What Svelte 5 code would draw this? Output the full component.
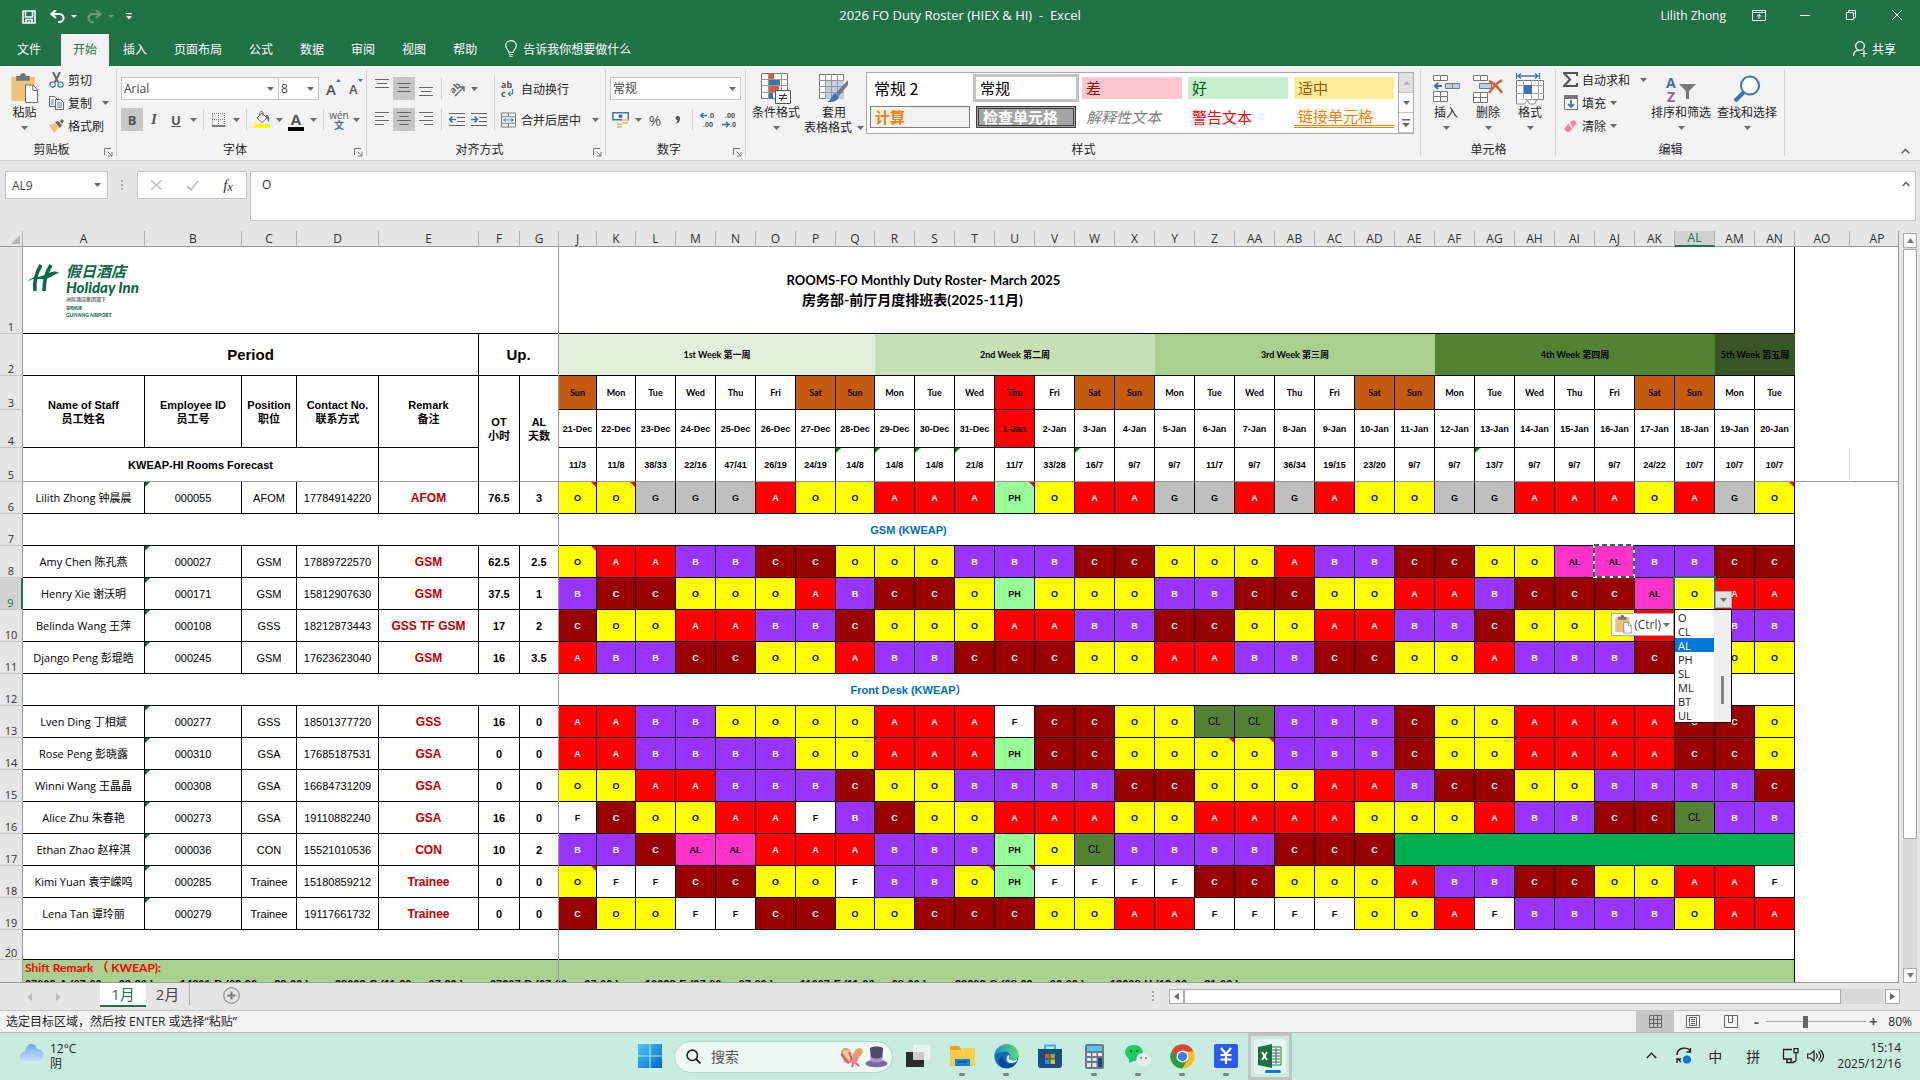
<script lang="ts">
  const menuTabs = ['文件', '开始', '插入', '页面布局', '公式', '数据', '审阅', '视图', '帮助'];

  const columns = [
    'A', 'B', 'C', 'D', 'E', 'F', 'G', 'J', 'K', 'L', 'M', 'N', 'O', 'P', 'Q', 'R', 'S', 'T', 'U', 'V',
    'W', 'X', 'Y', 'Z', 'AA', 'AB', 'AC', 'AD', 'AE', 'AF', 'AG', 'AH', 'AI', 'AJ', 'AK', 'AL', 'AM',
    'AN', 'AO', 'AP',
  ];
  const columnWidths: Record<string, number> = {
    A: 122, B: 97, C: 55, D: 82, E: 100, F: 41, G: 39, J: 38, K: 39, Q: 39, AO: 55, AP: 55,
  };
  const dayColumns = columns.slice(7, 38);

  const weekdays = ['Sun', 'Mon', 'Tue', 'Wed', 'Thu', 'Fri', 'Sat'];
  const days = dayColumns.map((col, i) => ({
    col,
    name: weekdays[i % 7],
    date: i < 11 ? `${21 + i}-Dec` : `${i - 10}-Jan`,
    weekend: i % 7 === 0 || i % 7 === 6,
    holiday: i === 11,
  }));

  const weeks = [
    { label: '1st Week 第一周', span: 8, color: '#e2efda' },
    { label: '2nd Week 第二周', span: 7, color: '#c6e0b4' },
    { label: '3rd Week 第三周', span: 7, color: '#a9d08e' },
    { label: '4th Week 第四周', span: 7, color: '#548235' },
    { label: '5th Week 第五周', span: 2, color: '#375623' },
  ];

  const forecast =
    '11/3 11/8 38/33 22/16 47/41 26/19 24/19 14/8 14/8 14/8 21/8 11/7 33/28 16/7 9/7 9/7 11/7 9/7 36/34 19/15 23/20 9/7 9/7 13/7 9/7 9/7 9/7 24/22 10/7 10/7 10/7'.split(' ');
  const forecastFlags = ['Q', 'R', 'S', 'T', 'W', 'AG'];

  // shifts run from column J on, one code per day; notes lists the commented columns
  const staff = [
    { row: 6, name: 'Lilith Zhong 钟晨晨', id: '000055', pos: 'AFOM', tel: '17784914220', remark: 'AFOM', ot: '76.5', al: '3', notes: ['J', 'K', 'U', 'AN'],
      shifts: 'O O G G G A O O A A A PH O A A G G A G A O O G G A A A O A G O' },
    { row: 8, name: 'Amy Chen 陈孔燕', id: '000027', pos: 'GSM', tel: '17889722570', remark: 'GSM', ot: '62.5', al: '2.5', notes: ['J'],
      shifts: 'O A A B B C C O O O B B B C C O O O A B B C C O O AL AL B B C C' },
    { row: 9, name: 'Henry Xie 谢沃明', id: '000171', pos: 'GSM', tel: '15812907630', remark: 'GSM', ot: '37.5', al: '1', notes: [],
      shifts: 'B C C O O O A B C C O PH O O O B B C C O O A A B C C C AL O A A' },
    { row: 10, name: 'Belinda Wang 王萍', id: '000108', pos: 'GSS', tel: '18212873443', remark: 'GSS TF GSM', ot: '17', al: '2', notes: [],
      shifts: 'C O O A A B B C O O O A A B B C C O O A A B B C O O O A A B B' },
    { row: 11, name: 'Django Peng 彭琨皓', id: '000245', pos: 'GSM', tel: '17623623040', remark: 'GSM', ot: '16', al: '3.5', notes: [],
      shifts: 'A B B C C O O A B B C C C O O A A B B C C O O A B B B C C O O' },
    { row: 13, name: 'Lven Ding 丁相斌', id: '000277', pos: 'GSS', tel: '18501377720', remark: 'GSS', ot: '16', al: '0', notes: [],
      shifts: 'A A B B O O O O A A A F C C O O CL CL B B B C O O A A A A C C O' },
    { row: 14, name: 'Rose Peng 彭晓露', id: '000310', pos: 'GSA', tel: '17685187531', remark: 'GSA', ot: '0', al: '0', notes: ['Z', 'AA'],
      shifts: 'A A B B B B O O A A A PH C C O O O O B B B C O O A A A A C C O' },
    { row: 15, name: 'Winni Wang 王晶晶', id: '000308', pos: 'GSA', tel: '16684731209', remark: 'GSA', ot: '0', al: '0', notes: [],
      shifts: 'O O A A B B B C O O B B B B C C O O O A A B C C O O B B B B C' },
    { row: 16, name: 'Alice Zhu 朱春艳', id: '000273', pos: 'GSA', tel: '19110882240', remark: 'GSA', ot: '16', al: '0', notes: [],
      shifts: 'F C O O A A F B C O O A A A O O A A A A O O O A B B C C CL B B' },
    { row: 17, name: 'Ethan Zhao 赵梓淇', id: '000036', pos: 'CON', tel: '15521010536', remark: 'CON', ot: '10', al: '2', notes: [],
      shifts: 'B B C AL AL A A A B B B PH O CL B B B B C C C' },
    { row: 18, name: 'Kimi Yuan 袁宇嵘鸣', id: '000285', pos: 'Trainee', tel: '15180859212', remark: 'Trainee', ot: '0', al: '0', notes: ['J', 'T', 'U'],
      shifts: 'O F F C C O O F B B O PH F F F F C C O O O A B B C C O O A A F' },
    { row: 19, name: 'Lena Tan 谭玲丽', id: '000279', pos: 'Trainee', tel: '19117661732', remark: 'Trainee', ot: '0', al: '0', notes: [],
      shifts: 'C O O F F C C O O C C C O O A A F F F F O O A F B B B B O A A' },
  ];
  const gsm = staff.slice(1, 5);
  const frontDesk = staff.slice(5);

  const shiftHours = [
    '07003-A (07:00 — 03:30 ),', '14301-B (03:30 — 23:00 ),', '23003-C (11:00 — 07:30 ),',
    '07007-D (07:00 — 07:00 ),', '10003-E (07:00 — 07:00 ),', '11007-F (11:00 — 08:00 ),',
    '22003-G (08:00 — 06:00 ),', '12008-H (13:00 — 21:00 ),',
  ];
  const codes = ['O', 'CL', 'AL', 'PH', 'SL', 'ML', 'BT', 'UL'];
  let picked = $state('AL');
  let cellText = $state('O');

  const styles = [
    { label: '常规 2', cls: 'plain' },
    { label: '常规', cls: 'current' },
    { label: '差', cls: 'bad' },
    { label: '好', cls: 'good' },
    { label: '适中', cls: 'neutral' },
    { label: '计算', cls: 'calc' },
    { label: '检查单元格', cls: 'check' },
    { label: '解释性文本', cls: 'explain' },
    { label: '警告文本', cls: 'warn' },
    { label: '链接单元格', cls: 'linked' },
  ];
</script>

{#snippet caret()}
  <svg class="caret" width="7" height="4" viewBox="0 0 7 4"><path d="M0 0h7L3.5 4z" fill="#6a6a6a" /></svg>
{/snippet}

{#snippet launcher()}
  <button class="launcher" aria-label="更多设置">
    <svg width="9" height="9" viewBox="0 0 9 9"><path d="M.5 7V.5H7M3.500 3.500l4 4M8 4v4H4" fill="none" stroke="#777" /></svg>
  </button>
{/snippet}

{#snippet lines(widths: number[], align: string)}
  <svg width="14" height={widths.length * 4 - 1} viewBox="0 0 14 {widths.length * 4 - 1}">
    {#each widths as w, i}
      <rect x={align === 'left' ? 0 : align === 'right' ? 14 - w : (14 - w) / 2} y={i * 4} width={w} height="1" fill="#666" />
    {/each}
  </svg>
{/snippet}

{#snippet clipboard(w: number, h: number)}
  <svg width={w} height={h} viewBox="0 0 28 32">
    <path d="M0 4h24v25H0z" fill="#edc37b" />
    <path d="M5 3h4c0-4 6-4 6 0h4v5H5z" fill="#737373" />
    <path d="M14.500 12.500h8l4.500 5v13H14.500z" fill="#fff" stroke="#666" />
    <path d="M22 13v5h5" fill="none" stroke="#666" />
  </svg>
{/snippet}

{#snippet shiftRow(p: (typeof staff)[number])}
  {@const list = p.shifts.split(' ')}
  <tr class="person">
    <th class="rowno" class:active={p.row === 9}>{p.row}</th>
    <td class="name">{p.name}</td>
    <td class="flag">{p.id}</td>
    <td>{p.pos}</td>
    <td>{p.tel}</td>
    <td class="remark">{p.remark}</td>
    <td class="b">{p.ot}</td>
    <td class="b">{p.al}</td>
    {#each list as code, i}
      {@const col = dayColumns[i]}
      <td class="shift s-{code}" class:note={p.notes.includes(col)}>
        {code}
        {#if p.row === 8 && col === 'AJ'}
          <svg class="ants" width="42" height="34" viewBox="0 0 42 34">
            <rect x="1" y="1" width="40" height="32" fill="none" stroke="#fff" stroke-width="2" />
            <rect x="1" y="1" width="40" height="32" fill="none" stroke="#217346" stroke-width="2" stroke-dasharray="5 3" />
          </svg>
        {/if}
        {#if p.row === 9 && col === 'AL'}
          <span class="cursor"></span>
          <button class="drop" aria-label="选择班次">{@render caret()}</button>
          <button class="paste-options">{@render clipboard(17, 19)}<span>(Ctrl)</span>{@render caret()}</button>
          <div class="picker">
            <select size="8" aria-label="班次列表" bind:value={picked}>
              {#each codes as c}
                <option value={c}>{c}</option>
              {/each}
            </select>
            <span class="picker-bar"><i></i></span>
          </div>
        {/if}
      </td>
    {/each}
    {#if list.length < 31}
      <td class="gone" colspan={31 - list.length}></td>
    {/if}
    <td class="blank"></td>
    <td class="blank"></td>
  </tr>
{/snippet}

<div class="window">
  <header class="titlebar">
    <div class="quick">
      <button aria-label="保存">
        <svg width="14" height="14" viewBox="0 0 14 14"><path d="M1 1h12v12H1zM3.500 1v6h7V1M4 13v-3.500h6V13" fill="none" stroke="#fff" stroke-width="1.600" /><path d="M6 11h2v2H6z" fill="#fff" /></svg>
      </button>
      <button class="undo" aria-label="撤消">
        <svg width="15" height="13" viewBox="0 0 15 13"><path d="M6 0 1.500 4 6 8M2 4h7c6 0 6 8 0 8H8" fill="none" stroke="#fff" stroke-width="2.200" /></svg>
        <svg width="6" height="3" viewBox="0 0 6 3"><path d="M0 0h6L3 3z" fill="#fff" /></svg>
      </button>
      <button class="redo" aria-label="恢复">
        <svg width="15" height="13" viewBox="0 0 15 13"><path d="M9 0l4.500 4L9 8M13 4H6C0 4 0 12 6 12h1" fill="none" stroke="#fff" stroke-width="2.200" /></svg>
        <svg width="6" height="3" viewBox="0 0 6 3"><path d="M0 0h6L3 3z" fill="#fff" /></svg>
      </button>
      <button class="more" aria-label="自定义快速访问工具栏">
        <svg width="6" height="7" viewBox="0 0 6 7"><path d="M0 0h6v1.200H0zM0 3h6L3 6.500z" fill="#fff" /></svg>
      </button>
    </div>
    <h1>2026 FO Duty Roster (HIEX &amp; HI)&nbsp; -&nbsp; Excel</h1>
    <div class="winctl">
      <span class="user">Lilith Zhong</span>
      <button aria-label="功能区显示选项">
        <svg width="14" height="11" viewBox="0 0 14 11"><path d="M.5.5h13v10H.5zM0 2.500h14M7 9V4.500M5 6.500l2-2 2 2" fill="none" stroke="#fff" /></svg>
      </button>
      <button aria-label="最小化"><svg width="10" height="10" viewBox="0 0 10 10"><path d="M0 5.500h10" stroke="#fff" /></svg></button>
      <button aria-label="还原"><svg width="10" height="10" viewBox="0 0 10 10"><path d="M.5 2.500h7v7h-7zM2.500 2V.5h7v7H8" fill="none" stroke="#fff" /></svg></button>
      <button aria-label="关闭"><svg width="10" height="10" viewBox="0 0 10 10"><path d="M0 0l10 10M10 0 0 10" stroke="#fff" /></svg></button>
    </div>
  </header>

  <nav class="tabs">
    {#each menuTabs as tab}
      <button class:on={tab === '开始'}>{tab}</button>
    {/each}
    <button class="tell">
      <svg width="12" height="17" viewBox="0 0 12 17"><path d="M4 12.500c0-2-3.300-3.500-3.300-7 0-6.500 10.600-6.500 10.600 0 0 3.500-3.300 5-3.300 7zM4 14.500h4M4.500 16.300h3" fill="none" stroke="#fff" stroke-width="1.100" /></svg>
      告诉我你想要做什么
    </button>
    <button class="share">
      <svg width="15" height="16" viewBox="0 0 15 16"><circle cx="7" cy="5" r="4.300" fill="none" stroke="#fff" stroke-width="1.200" /><path d="M.6 15c0-4 2.500-5.700 5-5.700M11 9v7M7.500 12.500h7" fill="none" stroke="#fff" stroke-width="1.200" /></svg>
      共享
    </button>
  </nav>

  <section class="ribbon">
    <div class="group clip">
      <div class="body">
        <button class="big paste">
          <span class="pic">{@render clipboard(28, 31)}</span>
          粘贴
          <span class="line">{@render caret()}</span>
        </button>
        <div class="stack">
          <button>
            <svg width="15" height="16" viewBox="0 0 15 16"><path d="M4 0l5 10M11 0 6 10" stroke="#666" stroke-width="2" /><circle cx="3.500" cy="12.500" r="2.700" fill="none" stroke="#4a80b8" stroke-width="1.300" /><circle cx="11.500" cy="12.500" r="2.700" fill="none" stroke="#4a80b8" stroke-width="1.300" /></svg>
            剪切
          </button>
          <button>
            <svg width="15" height="14" viewBox="0 0 15 14"><path d="M.5.5h5l3 3v7h-8z" fill="#fff" stroke="#666" /><path d="M6.500 3.500h5l3 3v7h-8z" fill="#fff" stroke="#666" /><path d="M2 4h3M2 6h3M2 8h3M8 7h5M8 9h5M8 11h5" stroke="#4a80b8" /></svg>
            复制 <span class="far">{@render caret()}</span>
          </button>
          <button>
            <svg width="15" height="14" viewBox="0 0 15 14"><path d="M0 6l6-2 4 4-5 6z" fill="#edc37b" /><path d="M6 3l3-1 4 4-2 3zM11 2l2-2 2 2-2 3z" fill="#666" /></svg>
            格式刷
          </button>
        </div>
      </div>
      <div class="caption">剪贴板{@render launcher()}</div>
    </div>

    <div class="group font">
      <div class="rows">
        <div class="tools">
          <span class="combo face"><select aria-label="字体"><option>Arial</option></select>{@render caret()}</span>
          <span class="combo size"><select aria-label="字号"><option>8</option></select>{@render caret()}</span>
          <button class="grow" aria-label="增大字号"><b>A</b><svg width="5" height="3" viewBox="0 0 5 3"><path d="M0 3h5L2.500 0z" fill="#3c74b0" /></svg></button>
          <button class="grow small" aria-label="减小字号"><b>A</b><svg width="5" height="3" viewBox="0 0 5 3"><path d="M0 0h5L2.500 3z" fill="#3c74b0" /></svg></button>
        </div>
        <div class="tools">
          <button class="t pressed"><b>B</b></button>
          <button class="t italic">I</button>
          <button class="t under">U</button>
          <button class="a" aria-label="下划线选项">{@render caret()}</button>
          <i class="sep"></i>
          <button class="t" aria-label="边框">
            <svg width="14" height="14" viewBox="0 0 14 14"><path d="M.5.500v12M6.500 0v12M12.500 0v12M0 .5h13M0 6.500h13" stroke="#777" stroke-dasharray="1 1" /><path d="M0 13h13.500" stroke="#555" stroke-width="1.500" /></svg>
          </button>
          <button class="a" aria-label="边框选项">{@render caret()}</button>
          <i class="sep"></i>
          <button class="t" aria-label="填充颜色">
            <svg width="17" height="17" viewBox="0 0 17 17"><path d="M3 7l5-5 5 5-5 4.500z" fill="#fff" stroke="#666" /><path d="M6 5V1.500c0-1.500 3-1.500 3 0V5" fill="none" stroke="#666" /><path d="M12 4c3 0 4 3 3 7-2-1-1-4-3-4z" fill="#4a80b8" /><path d="M0 13h16v4H0z" fill="#ff0" /></svg>
          </button>
          <button class="a" aria-label="填充选项">{@render caret()}</button>
          <button class="t fontcolor" aria-label="字体颜色"><b>A</b></button>
          <button class="a" aria-label="字体颜色选项">{@render caret()}</button>
          <i class="sep"></i>
          <button class="t pinyin"><span>wén</span><b>文</b></button>
          <button class="a" aria-label="拼音选项">{@render caret()}</button>
        </div>
      </div>
      <div class="caption">字体{@render launcher()}</div>
    </div>

    <div class="group align">
      <div class="body">
        <div class="rows">
          <div class="tools">
            <button class="t up" aria-label="顶端对齐">{@render lines([14, 10, 14], 'center')}</button>
            <button class="t pressed" aria-label="垂直居中">{@render lines([14, 10, 14], 'center')}</button>
            <button class="t down" aria-label="底端对齐">{@render lines([14, 10, 14], 'center')}</button>
            <i class="sep"></i>
            <button class="t" aria-label="方向">
              <svg width="18" height="18" viewBox="0 0 18 18"><text x="2" y="12" transform="rotate(-45 6 9)" font-size="9" font-weight="700" fill="#666">ab</text><path d="M7 16 15.500 7.500M11.500 7H16v4.500" fill="none" stroke="#666" stroke-width="1.300" /></svg>
            </button>
            <button class="a" aria-label="方向选项">{@render caret()}</button>
          </div>
          <div class="tools">
            <button class="t" aria-label="左对齐">{@render lines([14, 9, 14, 9], 'left')}</button>
            <button class="t pressed" aria-label="居中">{@render lines([14, 9, 14, 9], 'center')}</button>
            <button class="t" aria-label="右对齐">{@render lines([14, 9, 14, 9], 'right')}</button>
            <i class="sep"></i>
            <button class="t" aria-label="减少缩进">
              <svg width="16" height="14" viewBox="0 0 16 14"><path d="M0 .5h16M8 4.500h8M8 8.500h8M0 12.500h16" stroke="#666" /><path d="M7 6.500H1M3.500 3.500l-3 3 3 3" fill="none" stroke="#3c74b0" stroke-width="1.600" /></svg>
            </button>
            <button class="t" aria-label="增加缩进">
              <svg width="16" height="14" viewBox="0 0 16 14"><path d="M0 .5h16M8 4.500h8M8 8.500h8M0 12.500h16" stroke="#666" /><path d="M0 6.500h6M3.500 3.500l3 3-3 3" fill="none" stroke="#3c74b0" stroke-width="1.600" /></svg>
            </button>
          </div>
        </div>
        <i class="sep long"></i>
        <div class="rows">
          <button class="wide">
            <svg class="roomy" width="15" height="20" viewBox="0 0 15 20"><text x="0" y="9" font-size="9" font-weight="700" fill="#555">ab</text><text x="0" y="18" font-size="9" font-weight="700" fill="#555">c</text><path d="M11.500 10v5H7.500M9.500 12.500l-2 2.500 2 2" fill="none" stroke="#3c74b0" stroke-width="1.200" /></svg>
            自动换行
          </button>
          <button class="wide">
            <svg width="15" height="16" viewBox="0 0 16 16"><path d="M.5.5h15v15H.5zM0 4.500h16M0 11.500h16M8 0v4M8 12v4" fill="none" stroke="#777" /><path d="M2.500 8h11M5 6 3 8l2 2M11 6l2 2-2 2" fill="none" stroke="#3c74b0" /></svg>
            合并后居中 <span class="far">{@render caret()}</span>
          </button>
        </div>
      </div>
      <div class="caption">对齐方式{@render launcher()}</div>
    </div>

    <div class="group number">
      <div class="rows">
        <span class="combo"><select aria-label="数字格式"><option>常规</option></select>{@render caret()}</span>
        <div class="tools">
          <button class="t" aria-label="会计数字格式">
            <svg width="18" height="16" viewBox="0 0 18 16"><path d="M.8.8h15.400v7H.8z" fill="#fff" stroke="#3c74b0" stroke-width="1.500" /><circle cx="8.500" cy="4.300" r="2" fill="#3c74b0" /><path d="M10 7h6v2h-6zM10 10h6v2h-6zM5 11h5v2H5zM5 14h5v2H5z" fill="#edc37b" /></svg>
          </button>
          <button class="a" aria-label="会计格式选项">{@render caret()}</button>
          <button class="t sign">%</button>
          <button class="t sign" aria-label="千位分隔样式"><svg width="5" height="8" viewBox="0 0 5 8"><path d="M2.500 0C0 0 0 4 2.500 4 2.500 6 1.500 7 0 7.500 4 7.500 5 5 5 2.500 5 1 4 0 2.500 0z" fill="#555" /></svg></button>
          <i class="sep"></i>
          <button class="t" aria-label="增加小数位数">
            <svg width="16" height="19" viewBox="0 0 16 19" font-size="7" font-weight="700" fill="#555"><text x="8" y="8">.0</text><text x="3" y="17">.00</text><path d="M7 5.500H1M3.500 3l-3 2.500L3.500 8" fill="none" stroke="#3c74b0" stroke-width="1.500" /></svg>
          </button>
          <button class="t" aria-label="减少小数位数">
            <svg width="16" height="19" viewBox="0 0 16 19" font-size="7" font-weight="700" fill="#555"><text x="3" y="8">.00</text><text x="8" y="17">.0</text><path d="M0 14.500h6M4 12l3 2.500L4 17" fill="none" stroke="#3c74b0" stroke-width="1.500" /></svg>
          </button>
        </div>
      </div>
      <div class="caption">数字{@render launcher()}</div>
    </div>

    <div class="group styles">
      <div class="body">
        <button class="big cond">
          <span class="pic">
            <svg width="30" height="31" viewBox="0 0 30 31"><path d="M.5.5h26v25H.5z" fill="#fff" stroke="#777" /><path d="M0 6.500h27M0 12.500h27M0 19.500h27M7.500 0v26M20.500 0v26" stroke="#999" /><path d="M8 1h5v5H8zM8 13h10v6H8z" fill="#d65f3e" /><path d="M8 7h11v5H8zM8 20h4v5H8z" fill="#3c74b0" /><path d="M14.500 17.500h15v13h-15z" fill="#fff" stroke="#555" /><path d="M18 22.500h8M18 25.500h8M24 20l-4 8" stroke="#333" /></svg>
          </span>
          条件格式
          <span class="line">{@render caret()}</span>
        </button>
        <button class="big tablefmt">
          <span class="pic">
            <svg width="30" height="29" viewBox="0 0 30 29"><path d="M.5.5h24v24H.5z" fill="#fff" stroke="#777" /><path d="M7 7h18v18H7z" fill="#bcd0e8" /><path d="M0 6.500h25M0 12.500h25M0 18.500h25M6.500 0v25M12.500 0v25M18.500 0v25" stroke="#999" /><path d="M29 6v5l-9 11-3-3z" fill="#777" /><path d="M16 19l4 4c-2 5-7 5-12 5 5-2 4-7 8-9z" fill="#3c74b0" /></svg>
          </span>
          套用
          <span class="line">表格格式 {@render caret()}</span>
        </button>
        <div class="gallery">
          <div class="swatches">
            {#each styles as s}
              <button class="sw {s.cls}">{s.label}</button>
            {/each}
          </div>
          <div class="spin">
            <button disabled aria-label="上一行"><svg width="7" height="4" viewBox="0 0 7 4"><path d="M0 4h7L3.500 0z" fill="#b5b5b5" /></svg></button>
            <button aria-label="下一行">{@render caret()}</button>
            <button aria-label="其他样式"><svg width="8" height="8" viewBox="0 0 8 8"><path d="M0 0h8v1.500H0zM0 4h8L4 8z" fill="#666" /></svg></button>
          </div>
        </div>
      </div>
      <div class="caption">样式</div>
    </div>

    <div class="group cells">
      <div class="body">
        <button class="big">
          <span class="pic"><svg width="27" height="28" viewBox="0 0 27 28"><path d="M.5.5h14v5H.5zM7.500 0v6M.5 16.500h14v10H.5zM7.500 16v11M0 21.500h15" fill="#fff" stroke="#777" /><path d="M12.500 8.500h14v5h-14zM19.500 8v6" fill="#bcd0e8" stroke="#777" /><path d="M9 11H2M5 8l-3 3 3 3" fill="none" stroke="#3c74b0" stroke-width="2" /></svg></span>
          插入
          <span class="line">{@render caret()}</span>
        </button>
        <button class="big">
          <span class="pic"><svg width="30" height="28" viewBox="0 0 30 28"><path d="M.5.5h14v5H.5zM7.500 0v6M.5 17.500h14v10H.5zM7.500 17v11M0 22.500h15" fill="#fff" stroke="#777" /><path d="M6.500 8.500h12v5h-12z" fill="#bcd0e8" stroke="#777" /><path d="M16 6c5 2 9 6 13 12M29 5c-5 3-9 7-13 13" fill="none" stroke="#d65f3e" stroke-width="2.500" /></svg></span>
          删除
          <span class="line">{@render caret()}</span>
        </button>
        <button class="big">
          <span class="pic"><svg width="29" height="32" viewBox="0 0 29 32"><path d="M.5 0v6M23.500 0v6M2 3h20M5 .5 2 3l3 2.500M19 .5 22 3l-3 2.500" fill="none" stroke="#3c74b0" stroke-width="1.300" /><path d="M.5 7.500h27v19H.5z" fill="#fff" stroke="#777" /><path d="M0 12.500h28M0 20.500h28M7.500 7v20M15.500 7v20M22.500 7v20" stroke="#aaa" /><path d="M8 12h8v9H8z" fill="#3c74b0" /><path d="M.5 26v5h8l3-4 2 4h5l2-4" fill="#fff" stroke="#888" /></svg></span>
          格式
          <span class="line">{@render caret()}</span>
        </button>
      </div>
      <div class="caption">单元格</div>
    </div>

    <div class="group edit">
      <div class="body">
        <div class="stack">
          <button>
            <svg width="15" height="15" viewBox="0 0 15 15"><path d="M14 4V1H1l6 6.500L1 14h13v-3" fill="none" stroke="#555" stroke-width="2" /></svg>
            自动求和 <span class="far">{@render caret()}</span>
          </button>
          <button>
            <svg width="15" height="15" viewBox="0 0 15 15"><path d="M1.500.5h13v14h-13z" fill="#fff" stroke="#777" /><path d="M1 0h14v4H1z" fill="#777" /><path d="M8 5v7M5 9l3 3 3-3" fill="none" stroke="#3c74b0" stroke-width="1.800" /></svg>
            填充 {@render caret()}
          </button>
          <button>
            <svg width="15" height="12" viewBox="0 0 15 12"><path d="M7 2l4-2 3 3-4 5z" fill="#e8889a" /><path d="M6 3l4 5-4 4H4L1 9z" fill="#e8889a" /><path d="M5.500 3.500l4 5" stroke="#fff" /></svg>
            清除 {@render caret()}
          </button>
        </div>
        <button class="big sort">
          <span class="pic"><svg width="30" height="30" viewBox="0 0 30 30" font-size="14" font-weight="700"><text x="0" y="14" fill="#3c74b0">A</text><text x="1" y="28" fill="#955cb0">Z</text><path d="M13 10h17l-7 7v8h-3v-8z" fill="#777" /></svg></span>
          排序和筛选
          <span class="line">{@render caret()}</span>
        </button>
        <button class="big sort">
          <span class="pic"><svg width="28" height="28" viewBox="0 0 28 28"><circle cx="17" cy="10.500" r="9" fill="#fff" stroke="#3c74b0" stroke-width="2" /><path d="M11 17 2 26" stroke="#3c74b0" stroke-width="4" /></svg></span>
          查找和选择
          <span class="line">{@render caret()}</span>
        </button>
      </div>
      <div class="caption">编辑</div>
    </div>
    <button class="collapse" aria-label="折叠功能区"><svg width="9" height="6" viewBox="0 0 9 6"><path d="M.7 5.300 4.500 1.500l3.800 3.800" fill="none" stroke="#666" stroke-width="1.600" /></svg></button>
  </section>

  <section class="formula">
    <div class="namebox"><input aria-label="名称框" value="AL9" />{@render caret()}</div>
    <span class="grip"></span>
    <div class="fx">
      <button aria-label="取消"><svg width="11" height="10" viewBox="0 0 11 10"><path d="M0 0l11 10M11 0 0 10" stroke="#c3c3c3" stroke-width="1.600" /></svg></button>
      <button aria-label="输入"><svg width="13" height="11" viewBox="0 0 13 11"><path d="M1 6l4 4 7-9" fill="none" stroke="#c3c3c3" stroke-width="2" /></svg></button>
      <button class="fn"><i>f<sub>x</sub></i></button>
    </div>
    <div class="bar">
      <textarea aria-label="编辑栏" bind:value={cellText}></textarea>
      <svg width="8" height="6" viewBox="0 0 8 6"><path d="M.7 5 4 1.500 7.300 5" fill="none" stroke="#666" stroke-width="1.600" /></svg>
    </div>
  </section>

  <main class="work">
    <div class="sheet">
      <table>
        <colgroup>
          <col style="width: 23px" />
          {#each columns as c}
            <col style="width: {columnWidths[c] ?? 40}px" />
          {/each}
        </colgroup>
        <thead>
          <tr>
            <th class="corner"><svg width="9" height="9" viewBox="0 0 9 9"><path d="M9 0v9H0z" fill="#b4b4b4" /></svg></th>
            {#each columns as c}
              <th class:active={c === 'AL'}>{c}</th>
            {/each}
          </tr>
        </thead>
        <tbody>
          <tr class="r1">
            <th class="rowno">1</th>
            <td colspan="38" class="heading">
              <div class="logo">
                <svg width="32" height="28" viewBox="0 0 32 28"><path d="M14 1C9 9 7 18 8 27M24 1c-6 9-7 17-7 26" fill="none" stroke="#0a6847" stroke-width="3.600" /><path d="M0 18C5 12 10 14 15 12 21 10 26 5 32 9 27 10 24 14 18 15 11 16 6 13 0 18z" fill="#0a6847" /></svg>
                <div>
                  <b class="cn">假日酒店</b>
                  <b class="en">Holiday Inn</b>
                  <span>洲际酒店集团旗下</span>
                  <span class="city">贵阳机场</span>
                  <strong>GUIYANG AIRPORT</strong>
                </div>
              </div>
              <div class="t1">ROOMS-FO Monthly Duty Roster- March 2025</div>
              <div class="t2">房务部-前厅月度排班表(2025-11月)</div>
            </td>
            <td class="blank"></td><td class="blank"></td>
          </tr>
          <tr class="r2">
            <th class="rowno">2</th>
            <td colspan="5" class="large">Period</td>
            <td colspan="2" class="large">Up.</td>
            {#each weeks as w}
              <td colspan={w.span} class="week" style="background: {w.color}">{w.label}</td>
            {/each}
            <td class="blank"></td><td class="blank"></td>
          </tr>
          <tr class="r3">
            <th class="rowno">3</th>
            <td rowspan="2" class="b">Name of Staff<br />员工姓名</td>
            <td rowspan="2" class="b">Employee ID<br />员工号</td>
            <td rowspan="2" class="b">Position<br />职位</td>
            <td rowspan="2" class="b">Contact No.<br />联系方式</td>
            <td rowspan="2" class="b">Remark<br />备注</td>
            <td rowspan="3" class="b frozen">OT<br />小时</td>
            <td rowspan="3" class="b frozen">AL<br />天数</td>
            {#each days as d}
              <td class="weekday" class:weekend={d.weekend} class:holiday={d.holiday}>{d.name}</td>
            {/each}
            <td class="blank"></td><td class="blank"></td>
          </tr>
          <tr class="r4">
            <th class="rowno">4</th>
            {#each days as d}
              <td class="date" class:holiday={d.holiday}>{d.date}</td>
            {/each}
            <td class="blank"></td><td class="blank"></td>
          </tr>
          <tr class="r5">
            <th class="rowno">5</th>
            <td colspan="4" class="b">KWEAP-HI Rooms Forecast</td>
            <td></td>
            {#each forecast as f, i}
              <td class="date" class:flag={forecastFlags.includes(dayColumns[i])}>{f}</td>
            {/each}
            <td class="blank lined"></td><td class="blank"></td>
          </tr>
          {@render shiftRow(staff[0])}
          <tr class="person">
            <th class="rowno">7</th>
            <td colspan="38" class="section">GSM (KWEAP)</td>
            <td class="blank"></td><td class="blank"></td>
          </tr>
          {#each gsm as p}
            {@render shiftRow(p)}
          {/each}
          <tr class="person">
            <th class="rowno">12</th>
            <td colspan="38" class="section">Front Desk (KWEAP）</td>
            <td class="blank"></td><td class="blank"></td>
          </tr>
          {#each frontDesk as p}
            {@render shiftRow(p)}
          {/each}
          <tr class="r20">
            <th class="rowno">20</th>
            <td colspan="38"></td>
            <td class="blank"></td><td class="blank"></td>
          </tr>
          <tr class="r21">
            <th class="rowno">21</th>
            <td colspan="38" class="legend">
              <div class="key">Shift Remark （ KWEAP):</div>
              <div class="hours">{#each shiftHours as h}<span>{h}</span>{/each}</div>
            </td>
            <td class="blank"></td><td class="blank"></td>
          </tr>
        </tbody>
      </table>
      <i class="freeze"></i>
    </div>
    <div class="vscroll">
      <button aria-label="向上滚动"><svg width="7" height="5" viewBox="0 0 7 5"><path d="M0 5h7L3.500 0z" fill="#777" /></svg></button>
      <div class="track"><div class="thumb"></div></div>
      <button aria-label="向下滚动"><svg width="7" height="5" viewBox="0 0 7 5"><path d="M0 0h7L3.500 5z" fill="#777" /></svg></button>
    </div>
  </main>

  <footer class="sheets">
    <div class="arrows">
      <svg width="5" height="8" viewBox="0 0 5 8"><path d="M5 0v8L0 4z" fill="#bbb" /></svg>
      <svg width="5" height="8" viewBox="0 0 5 8"><path d="M0 0v8l5-4z" fill="#bbb" /></svg>
    </div>
    <button class="on">1月</button>
    <button class="tab">2月</button>
    <button class="add" aria-label="新工作表"><svg width="17" height="17" viewBox="0 0 17 17"><circle cx="8.500" cy="8.500" r="7.800" fill="none" stroke="#777" /><path d="M8.500 4.500v8M4.500 8.500h8" stroke="#777" stroke-width="2" /></svg></button>
    <span class="grip"></span>
    <div class="hscroll">
      <button aria-label="向左滚动"><svg width="5" height="7" viewBox="0 0 5 7"><path d="M5 0v7L0 3.500z" fill="#666" /></svg></button>
      <div class="track"><div class="thumb"></div></div>
      <button aria-label="向右滚动"><svg width="5" height="7" viewBox="0 0 5 7"><path d="M0 0v7l5-3.500z" fill="#666" /></svg></button>
    </div>
  </footer>

  <div class="status">
    <span>选定目标区域，然后按 ENTER 或选择“粘贴”</span>
    <div class="views">
      <button class="on" aria-label="普通"><svg width="13" height="13" viewBox="0 0 13 13"><path d="M.5.5h12v12H.5zM0 4.500h13M0 8.500h13M4.500 0v13M8.500 0v13" fill="none" stroke="#666" /></svg></button>
      <button aria-label="页面布局"><svg width="14" height="13" viewBox="0 0 14 13"><path d="M.5.5h13v12H.5zM3.500 2.500h7v8h-7zM5 4.500h4M5 6.500h4M5 8.500h4" fill="none" stroke="#666" /></svg></button>
      <button aria-label="分页预览"><svg width="14" height="13" viewBox="0 0 14 13"><path d="M.5.5h13v12H.5zM4.500 0v7.500M8.500 0v7.500M4 7.500h5" fill="none" stroke="#666" /></svg></button>
    </div>
    <div class="zoom">
      <b>-</b><input type="range" min="10" max="190" value="80" aria-label="缩放" /><b>+</b>
      <span>80%</span>
    </div>
  </div>

  <div class="taskbar">
    <button class="weather">
      <svg width="25" height="18" viewBox="0 0 25 18"><defs><linearGradient id="cl" x2="0" y2="1"><stop stop-color="#7aa6e8" /><stop offset="1" stop-color="#c9dcf8" /></linearGradient></defs><path d="M6 17C-1 17-1 8 6 8 7-2 17-2 18 5c9 0 9 12 0 12z" fill="url(#cl)" /></svg>
      <span>12°C<br />阴</span>
    </button>
    <div class="dock">
      <button aria-label="开始"><svg width="24" height="24" viewBox="0 0 24 24"><defs><linearGradient id="win" x2="1" y2="1"><stop stop-color="#4cc8f8" /><stop offset="1" stop-color="#0067c8" /></linearGradient></defs><path d="M0 0h11.500v11.500H0zM12.500 0H24v11.500H12.500zM0 12.500h11.500V24H0zM12.500 12.500H24V24H12.500z" fill="url(#win)" /></svg></button>
      <label class="search">
        <svg width="15" height="15" viewBox="0 0 15 15"><circle cx="6.300" cy="6.300" r="5.200" fill="none" stroke="#222" stroke-width="1.600" /><path d="M10 10l4.500 4.500" stroke="#222" stroke-width="1.800" /></svg>
        <input placeholder="搜索" aria-label="搜索" />
        <svg width="48" height="22" viewBox="0 0 48 22"><path d="M1 7C1 2 6 1 9 3l4 6c1-5 5-8 9-6 2 3-1 8-6 10-3 4-8 6-12 3z" fill="#e0a468" /><path d="M3 6c3-3 6-2 8 1l2 4-5 4z" fill="#f3cd9b" /><path d="M1 8l8 9M9 6l3 8 7 6M14 14l-2 7" fill="none" stroke="#e2566d" stroke-width="2" /><path d="M12 12l7-1-3 7-4-1z" fill="#e98293" /><path d="M30 2c3-2 10-2 13 0l-1 14H31z" fill="#53466e" /><ellipse cx="36.500" cy="17.500" rx="11" ry="3.800" fill="#7d6aa3" /><path d="M31 11c4 2 7 2 11 0v4c-4 2-7 2-11 0z" fill="#a894cc" /></svg>
      </label>
      <button aria-label="任务视图"><svg width="24" height="24" viewBox="0 0 24 24"><path d="M0 8h18v15H0z" fill="#2b2b2b" /><path d="M7 1h17v15H7z" fill="#f4f4f4" fill-opacity=".8" /></svg></button>
      <button class="run" aria-label="文件资源管理器"><svg width="25" height="24" viewBox="0 0 25 24"><path d="M0 2h9l2 3h14v17H0z" fill="#e2a31b" /><path d="M0 6h10l3-2h12v18H0z" fill="#fbcb4a" /><path d="M5 15h15v7H5z" fill="#1080d8" /><path d="M8 18h9" stroke="#0a5ca8" stroke-width="2" /></svg></button>
      <button class="run" aria-label="Edge"><svg width="25" height="25" viewBox="0 0 25 25"><defs><linearGradient id="edge" x2="1"><stop stop-color="#1b8ddb" /><stop offset="1" stop-color="#5fdc70" /></linearGradient></defs><circle cx="12.500" cy="12.500" r="12" fill="#0f6cbd" /><path d="M.5 12C1-3 24-4 24.500 11c0 6-9 6-9 3 2-4-2-7-6-6-5 0-8 2-9 4z" fill="url(#edge)" /><path d="M9 12c-1 6 5 10 13 7-5 7-14 6-17 1-1-4 1-7 4-8z" fill="#0a4a94" /><path d="M15 14c1 3 6 3 8 1 0 3-3 4-6 4-4 0-6-4-3-8 1 0 2 1 1 3z" fill="#d8f3ee" /></svg></button>
      <button aria-label="Microsoft Store"><svg width="24" height="25" viewBox="0 0 24 25"><path d="M7 7V1.500h10V7" fill="none" stroke="#35b5ea" stroke-width="2" /><path d="M0 5h24v16c0 2-1 3-3 3H3c-2 0-3-1-3-3z" fill="#174e86" /><path d="M7 10h4.500v4.500H7z" fill="#f25022" /><path d="M12.500 10H17v4.500h-4.500z" fill="#7fba00" /><path d="M7 15.500h4.500V20H7z" fill="#00a4ef" /><path d="M12.500 15.500H17V20h-4.500z" fill="#ffb900" /></svg></button>
      <button class="run" aria-label="计算器"><svg width="19" height="25" viewBox="0 0 19 25"><rect width="19" height="25" rx="2" fill="#6d7a86" /><path d="M2 2h15v5H2z" fill="#4fc6f2" /><path d="M2 9h4v3H2zM7.500 9h4v3h-4zM13 9h4v3h-4zM2 14h4v3H2zM7.500 14h4v3h-4zM2 19h4v4H2zM7.500 19h4v4h-4z" fill="#e4e8ec" /><path d="M13 14h4v9h-4z" fill="#0f4c81" /></svg></button>
      <button class="run" aria-label="微信"><svg width="26" height="24" viewBox="0 0 26 24"><path d="M9 1c12 0 12 16 0 16l-5 2v-4C-3 10 0 1 9 1z" fill="#1dcc66" /><path d="M18 9c9 0 10 9 5 12v2l-4-1c-10 0-10-13-1-13z" fill="#ececec" /><circle cx="6" cy="7" r="1.200" fill="#0a5a2c" /><circle cx="12" cy="7" r="1.200" fill="#0a5a2c" /><circle cx="16" cy="14" r="1" fill="#777" /><circle cx="21" cy="14" r="1" fill="#777" /></svg></button>
      <button class="run" aria-label="Chrome"><svg width="25" height="25" viewBox="0 0 25 25"><circle cx="12.500" cy="12.500" r="12" fill="#fbc116" /><path d="M12.500 12.500 2 6.500A12 12 0 0 0 12.500 24.500l5-9z" fill="#2a9c48" /><path d="M2 6.500a12 12 0 0 1 21.500 1H12l-4.500 7z" fill="#dc4437" /><circle cx="12.500" cy="12.500" r="6" fill="#fff" /><circle cx="12.500" cy="12.500" r="4.600" fill="#3b7ded" /></svg></button>
      <button class="run" aria-label="收银"><svg width="24" height="24" viewBox="0 0 24 24"><rect width="24" height="24" rx="2" fill="#2a5cf5" /><path d="M7 4l5 6 5-6M12 10v10M6.500 11h11M6.500 15.500h11" fill="none" stroke="#fff" stroke-width="2.200" /></svg></button>
      <button class="run current" aria-label="Excel"><svg width="24" height="24" viewBox="0 0 24 24"><path d="M12 3h11v18H12z" fill="#fff" stroke="#217346" /><path d="M14 6h8M14 9h8M14 12h8M14 15h8M14 18h8M18 4v16" stroke="#217346" /><path d="M0 3 14 0v24L0 21z" fill="#1d7044" /><path d="M4 8l5 8M9 8l-5 8" stroke="#fff" stroke-width="1.800" /></svg></button>
    </div>
    <div class="tray">
      <svg width="11" height="7" viewBox="0 0 11 7"><path d="M.8 6 5.500 1.300 10.200 6" fill="none" stroke="#222" stroke-width="1.400" /></svg>
      <svg class="sync" width="16" height="17" viewBox="0 0 16 17"><path d="M1 8c0-8 11-9 13.500-3M14.500 1v4h-4M1 16v-4h4M2 12l3 3" fill="none" stroke="#222" stroke-width="1.400" /><circle cx="11" cy="12.500" r="4" fill="#0078d4" /></svg>
      <span class="ime">中</span>
      <span class="ime py">拼</span>
      <svg class="net" width="17" height="16" viewBox="0 0 17 16"><path d="M10 1.500H1.500v9.500H10M4 14.500h8M5 11v3M9 11v3" fill="none" stroke="#222" stroke-width="1.300" /><path d="M12 .7h4v4h-4zM14 5v7c0 2-2 2-3 2" fill="none" stroke="#222" stroke-width="1.300" /></svg>
      <svg class="vol" width="17" height="14" viewBox="0 0 17 14"><path d="M.7 5h2.800L7 2v10L3.500 9H.7zM9 4.500c1.500 1.500 1.500 3.500 0 5M11.500 2.500c3 3 3 6 0 9M13.500 1c4 4 4 8 0 12" fill="none" stroke="#222" stroke-width="1.200" /></svg>
      <time>15:14<br />2025/12/16</time>
    </div>
  </div>
</div>

<style>
  :global(body) { margin: 0; overflow: hidden; }

  .window {
    display: flex;
    flex-direction: column;
    height: 100vh;
    background: #e6e6e6;
    font-family: 'Open Sans', 'Noto Sans CJK SC', sans-serif;
    font-size: 12px;
    color: #262626;
  }
  .window *, .window *::before, .window *::after { box-sizing: border-box; }
  svg { display: block; flex: none; }
  svg text { font-family: 'Open Sans', sans-serif; }
  button {
    padding: 0;
    border: 0;
    background: transparent;
    font: inherit;
    color: inherit;
    white-space: nowrap;
  }

  /* title bar */
  .titlebar {
    display: grid;
    grid-template-columns: 1fr auto 1fr;
    align-items: center;
    flex: none;
    height: 34px;
    padding-bottom: 4px;
    background: #217346;
    color: #fff;
  }
  .titlebar h1 { margin: 0; font-size: 13px; font-weight: 400; }
  .quick { display: flex; align-items: center; padding: 3px 0 0 22px; }
  .quick button { display: flex; align-items: center; gap: 6px; margin-right: 14px; }
  .quick .undo { margin-right: 10px; }
  .quick .redo { margin-right: 12px; opacity: 0.3; }
  .winctl { display: flex; align-items: center; justify-content: flex-end; }
  .winctl button { display: grid; place-items: center; width: 46px; height: 30px; }
  .user { margin-right: 10px; }

  .tabs {
    display: flex;
    flex: none;
    height: 32px;
    padding-left: 4px;
    background: #217346;
    color: #fff;
  }
  .tabs button { display: flex; align-items: center; padding: 0 13px 3px 14px; }
  .tabs button:first-child { padding-right: 20px; padding-left: 13px; }
  .tabs button.on { padding: 0 12px 3px; background: #f3f3f3; color: #217346; }
  .tabs button.tell { gap: 6px; padding-left: 15px; }
  .tabs button.share { gap: 4px; margin-left: auto; padding-right: 24px; }

  /* ribbon */
  .ribbon {
    position: relative;
    display: flex;
    flex: none;
    height: 95px;
    background: #f3f3f3;
    border-bottom: 1px solid #cfcfcf;
  }
  .group { position: relative; display: flex; flex-direction: column; flex: none; padding: 0 4px; }
  .group::after {
    content: '';
    position: absolute;
    top: 4px;
    right: 0;
    bottom: 4px;
    width: 1px;
    background: #d2d2d2;
  }
  .clip { width: 117px; }
  .font { width: 250px; }
  .align { width: 239px; }
  .number { width: 140px; }
  .styles { width: 675px; }
  .cells { width: 135px; }
  .edit { width: 229px; }
  .clip, .font, .align, .number { padding-right: 0; }
  .body { display: flex; }
  .caption { margin-top: auto; height: 20px; padding-right: 18px; line-height: 20px; text-align: center; }
  .styles .caption, .cells .caption, .edit .caption { padding-right: 0; }
  .launcher { position: absolute; right: 4px; bottom: 3px; }
  .rows { display: flex; flex-direction: column; gap: 8px; padding-top: 11px; }
  .tools { display: flex; align-items: center; height: 23px; }
  .t { display: grid; place-items: center; width: 22px; height: 23px; font-size: 13px; color: #555; }
  .t.pressed { background: #c6c6c6; }
  .t.up { padding-bottom: 8px; }
  .t.down { padding-top: 8px; }
  .a { display: grid; place-items: center; width: 12px; height: 23px; }
  .sep { width: 1px; height: 21px; margin: 0 4px; background: #d2d2d2; }
  .sep.long { height: 54px; margin-top: 10px; }
  .italic { font-family: 'Liberation Serif', serif; font-style: italic; font-weight: 700; font-size: 15px; }
  .under { font-weight: 700; text-decoration: underline; }
  .fontcolor { border-bottom: 4px solid #000; height: 19px; width: 16px; margin: 4px 3px 0; font-size: 15px; line-height: 15px; }
  .pinyin { font-size: 10px; line-height: 10px; align-content: center; }
  .pinyin b { color: #3c74b0; }
  .grow { display: flex; align-items: flex-start; width: 16px; margin-left: 7px; font-size: 15px; line-height: 20px; color: #555; }
  .grow b { font-weight: 600; }
  .grow.small { font-size: 13px; }
  .sign { font-size: 15px; }

  .combo { position: relative; display: flex; width: 131px; height: 23px; border: 1px solid #c6c6c6; background: #fff; }
  .combo.face { width: 158px; }
  .combo.size { width: 40px; border-left: 0; }
  .combo select {
    appearance: none;
    width: 100%;
    padding: 0 2px;
    border: 0;
    background: transparent;
    font: inherit;
    color: #444;
  }
  .combo .caret, .combo :global(.caret) { position: absolute; right: 4px; top: 9px; }

  .stack { display: flex; flex-direction: column; padding-top: 2px; }
  .stack button { display: flex; align-items: center; gap: 4px; height: 23px; }
  .clip .stack { padding-left: 4px; }
  .far { margin-left: 6px; }
  .wide { display: flex; align-items: center; gap: 5px; height: 23px; padding-left: 2px; }

  .big { display: flex; flex-direction: column; align-items: center; padding-top: 6px; line-height: 15px; }
  .pic { display: grid; place-items: center; height: 33px; }
  .line { display: flex; align-items: center; justify-content: center; gap: 5px; height: 15px; }
  .big.paste { width: 41px; }
  .cells .big { width: 42px; }
  .cells .pic { justify-items: start; }
  .edit .stack { width: 88px; padding-left: 3px; }
  .edit .sort { width: 66px; }
  .cond { width: 52px; }
  .tablefmt { width: 64px; }

  .gallery { display: flex; height: 62px; margin-top: 6px; border: 1px solid #ababab; background: #fff; }
  .swatches {
    display: grid;
    grid-template-columns: repeat(5, 106px);
    grid-template-rows: 29px 29px;
    width: 531px;
  }
  .sw {
    align-self: center;
    justify-self: center;
    width: 100px;
    height: 22px;
    padding: 0 4px;
    font-family: 'Noto Sans CJK SC', sans-serif;
    font-size: 15px;
    line-height: 20px;
    text-align: left;
  }
  .plain { font-size: 16px; color: #000; }
  .current { width: 106px; height: 28px; border: 3px solid #c3c3c3; color: #000; }
  .bad { background: #ffc7ce; color: #9c0006; }
  .good { background: #c6efce; color: #006100; }
  .neutral { background: #ffeb9c; color: #9c5700; }
  .calc { border: 1px solid #7f7f7f; background: #f2f2f2; color: #fa7d00; font-weight: 700; }
  .check { border: 3px double #3f3f3f; background: #a5a5a5; color: #fff; font-weight: 700; line-height: 16px; }
  .explain { color: #7f7f7f; font-style: italic; }
  .warn { color: #f00; }
  .linked { border-bottom: 3px double #ff8001; color: #fa7d00; }
  .spin { display: grid; grid-template-rows: repeat(3, 20px); width: 15px; border-left: 1px solid #ababab; }
  .spin button { display: grid; place-items: center; border-bottom: 1px solid #c6c6c6; }
  .spin button:disabled { background: #e1e1e1; }
  .collapse { margin: 82px 10px 0 auto; align-self: flex-start; }

  /* formula bar */
  .formula { display: flex; align-items: flex-start; flex: none; padding: 10px 4px 10px 5px; }
  .namebox, .fx { display: flex; align-items: center; height: 28px; border: 1px solid #c6c6c6; background: #fff; }
  .namebox { width: 103px; padding-right: 6px; }
  .namebox input { flex: 1; min-width: 0; padding: 0 6px; border: 0; outline: 0; font: inherit; color: #444; }
  .grip {
    width: 2px;
    height: 11px;
    margin: 9px 14px 0 13px;
    background: repeating-linear-gradient(#aaa 0 2px, transparent 2px 4px);
  }
  .fx { width: 110px; }
  .fx button { display: grid; place-items: center; flex: 1; }
  .fx .fn { font: 15px/20px 'Liberation Serif', serif; color: #333; }
  .fx sub { font-size: 12px; line-height: 0; vertical-align: -1px; }
  .bar {
    display: flex;
    flex: 1;
    height: 50px;
    margin-left: 3px;
    padding: 5px 5px 0 11px;
    border: 1px solid #c6c6c6;
    background: #fff;
  }
  .bar svg { margin-top: 4px; }
  .bar textarea { flex: 1; height: 40px; padding: 0; border: 0; outline: 0; overflow: hidden; resize: none; background: #fff; font: inherit; line-height: 16px; color: #333; }

  /* worksheet */
  .work { display: flex; flex: 1; min-height: 0; }
  .sheet {
    position: relative;
    flex: 1;
    min-width: 0;
    overflow: hidden;
    border-right: 1px solid #9b9b9b;
    border-bottom: 1px solid #9b9b9b;
    background: #fff;
  }
  table {
    width: 1905px;
    table-layout: fixed;
    border-collapse: separate;
    border-spacing: 0;
    font: 11px/14px 'Liberation Sans', 'Noto Sans CJK SC', sans-serif;
    color: #000;
  }
  thead tr { height: 16px; }
  thead th {
    height: 16px;
    padding: 0;
    border-right: 1px solid #b1b1b1;
    border-bottom: 1px solid #9b9b9b;
    background: #e6e6e6;
    font: 12px/15px 'Open Sans', sans-serif;
    color: #333;
  }
  thead th.active { border-bottom: 2px solid #217346; background: #d2d2d2; color: #217346; line-height: 14px; }
  .corner svg { margin: 2px 0 0 11px; }
  .rowno {
    padding: 0;
    border-right: 1px solid #9b9b9b;
    border-bottom: 1px solid #c6c6c6;
    background: #e6e6e6;
    font: 11px/12px 'Open Sans', sans-serif;
    color: #333;
    vertical-align: bottom;
  }
  .rowno.active { border-right: 2px solid #217346; background: #d2d2d2; color: #217346; }
  td {
    position: relative;
    padding: 0;
    border-right: 1px solid #000;
    border-bottom: 1px solid #000;
    text-align: center;
    vertical-align: middle;
    white-space: nowrap;
  }
  td.blank { border: 0; }
  .r1 { height: 87px; }
  .r2 { height: 42px; }
  .r3 { height: 34px; }
  .r4 { height: 38px; }
  .r5 { height: 34px; }
  .r5 td, td.frozen { border-bottom-color: #9b9b9b; }
  .r5 td.blank { border-bottom: 1px solid #9b9b9b; }
  .r5 td.lined { border-right: 1px solid #d4d4d4; }
  .person { height: 32px; }
  .r20 { height: 30px; }
  .r21 { height: 60px; }

  .b { font-weight: 700; }
  .large { font-size: 15px; font-weight: 700; }
  .heading { font: 700 14px/20px Lato, 'Noto Sans CJK SC', sans-serif; }
  .t1 { padding-left: 30px; font-size: 13px; }
  .t2 { padding-left: 8px; }
  .week { border-right: 0; font: 700 9px/12px Lato, 'Noto Sans CJK SC', sans-serif; }
  .weekday { font: 700 9px/12px Lato, sans-serif; }
  .date { font-size: 9px; font-weight: 700; }
  .weekend { background: #c55a11; }
  .holiday { background: #f00; }
  .name { font: 11px/14px 'Open Sans', 'Noto Sans CJK SC', sans-serif; }
  .remark { font-size: 12px; font-weight: 700; color: #c00000; }
  .section { font-size: 11px; font-weight: 700; color: #0070c0; }
  .flag::before {
    content: '';
    position: absolute;
    top: 0;
    left: 0;
    border-top: 5px solid #008000;
    border-right: 5px solid transparent;
  }
  .note::before {
    content: '';
    position: absolute;
    top: 0;
    right: 0;
    border-top: 5px solid #f00;
    border-left: 5px solid transparent;
  }

  .shift { font-size: 9px; font-weight: 700; }
  .s-O { background: #ff0; }
  .s-A { background: #f00; color: #fff; }
  .s-B { background: #93f; color: #fff; }
  .s-C { background: #900; color: #fff; }
  .s-G { background: #bfbfbf; }
  .s-PH { background: #9f9; }
  .s-AL { background: #f3c; }
  .s-CL { background: #548235; font-size: 10px; font-weight: 400; }
  .gone { background: #00b050; }

  .legend { padding-left: 2px; background: #a9d08e; font: 700 12px/16px Lato, 'Noto Sans CJK SC', sans-serif; text-align: left; vertical-align: top; }
  .key { color: #f00; }
  .hours { display: flex; font: 700 11px/16px 'Liberation Sans', sans-serif; }
  .hours span { width: 155px; }

  .logo { position: absolute; top: 16px; left: 4px; display: flex; gap: 7px; color: #0a6847; text-align: left; }
  .logo b, .logo span, .logo strong { display: block; }
  .logo .cn { font: italic 700 15px/16px 'Noto Sans CJK SC', sans-serif; }
  .logo .en { font: italic 900 15px/16px Lato, sans-serif; }
  .logo span { font-size: 5px; line-height: 9px; color: #777; }
  .logo .city { font-size: 4px; line-height: 9px; color: #0a6847; }
  .logo strong { font-size: 5px; line-height: 5px; }
  .logo > svg { margin-top: 1px; }

  /* pieces floating over the grid */
  .freeze { position: absolute; top: 16px; bottom: 0; left: 558px; width: 1px; background: #9b9b9b; }
  .ants { position: absolute; top: -2px; left: -2px; z-index: 2; }
  .cursor { position: absolute; inset: -2px; z-index: 2; border: 2px solid #217346; box-shadow: inset 0 0 0 1px #fff; }
  .drop {
    position: absolute;
    top: 13px;
    left: 40px;
    z-index: 3;
    display: grid;
    place-items: center;
    width: 17px;
    height: 17px;
    border: 1px solid #ababab;
    background: #dde0e5;
  }
  .paste-options {
    position: absolute;
    top: 35px;
    right: 40px;
    z-index: 3;
    display: flex;
    align-items: center;
    gap: 2px;
    height: 23px;
    padding: 0 3px;
    border: 1px solid #ababab;
    background: #fff;
    font: 12px/16px 'Open Sans', sans-serif;
    color: #444;
  }
  .picker {
    position: absolute;
    top: 31px;
    left: -1px;
    z-index: 4;
    display: flex;
    width: 58px;
    height: 114px;
    border: 1px solid #000;
    background: #fff;
  }
  .picker select {
    flex: 1;
    min-width: 0;
    padding: 0;
    border: 0;
    outline: 0;
    overflow: hidden;
    background: #fff;
    font: 11px/14px 'Open Sans', sans-serif;
    color: #222;
  }
  .picker option { height: 14px; min-height: 14px; padding: 0 3px; line-height: 12px; }
  .picker option:checked { background: linear-gradient(#0078d7, #0078d7); -webkit-text-fill-color: #fff; }
  .picker-bar { position: relative; width: 17px; background: #f0f0f0; }
  .picker-bar i { position: absolute; top: 66px; left: 7px; width: 3px; height: 28px; background: #858585; }

  .vscroll { display: flex; flex-direction: column; flex: none; width: 21px; padding: 2px 3px 0 4px; }
  .vscroll button, .hscroll button { display: grid; place-items: center; border: 1px solid #ababab; background: #fff; }
  .vscroll button { height: 15px; }
  .vscroll .track { flex: 1; padding-top: 1px; background: #dadada; }
  .thumb { border: 1px solid #ababab; background: #fff; }
  .vscroll .thumb { height: 82%; }

  /* sheet tabs */
  .sheets { display: flex; align-items: flex-start; flex: none; height: 28px; border-bottom: 1px solid #c6c6c6; font-size: 15px; }
  .arrows { display: flex; gap: 24px; padding: 10px 39px 0 27px; }
  .sheets .on { width: 46px; height: 24px; border-bottom: 2px solid #217346; background: #fff; color: #217346; line-height: 20px; }
  .sheets .tab { width: 44px; height: 22px; line-height: 20px; border-right: 1px solid #ababab; color: #444; }
  .sheets .add { margin: 4px auto 0 33px; }
  .sheets .grip { margin: 8px 15px 0; }
  .hscroll { display: flex; flex: none; width: 39%; max-width: 731px; height: 15px; margin: 6px 20px 0 0; }
  .hscroll button { width: 15px; }
  .hscroll .track { flex: 1; margin-right: 2px; background: #dadada; }
  .hscroll .thumb { width: 94%; height: 15px; }

  .status { display: flex; align-items: center; flex: none; height: 22px; padding-left: 6px; border-bottom: 1px solid #a8bdb4; background: #f3f3f3; }
  .status > span { padding-bottom: 2px; }
  .views { display: flex; margin-left: auto; }
  .views button { display: grid; place-items: center; width: 38px; height: 21px; }
  .views .on { background: #c6c6c6; }
  .zoom { display: flex; align-items: center; padding: 0 8px 0 4px; }
  .zoom b { width: 8px; font-size: 15px; line-height: 15px; color: #555; }
  .zoom span { width: 35px; text-align: right; }
  .zoom input { appearance: none; width: 100px; height: 12px; margin: 0 3px 0 4px; background: linear-gradient(#aaa, #aaa) center / 100% 1px no-repeat; }
  .zoom input::-webkit-slider-thumb { appearance: none; width: 5px; height: 12px; background: #666; }

  /* taskbar */
  .taskbar { display: grid; grid-template-columns: 1fr auto 1fr; flex: none; height: 47px; background: #c8ecdf; }
  .weather { display: flex; align-items: center; gap: 6px; padding: 0 0 2px 19px; line-height: 15px; text-align: left; }
  .weather svg { margin-bottom: 6px; }
  .dock { display: flex; align-items: center; }
  .dock button { position: relative; display: grid; place-items: center; width: 44px; height: 47px; padding-bottom: 1px; }
  .dock button.run::after {
    content: '';
    position: absolute;
    bottom: 4px;
    left: 19px;
    width: 6px;
    height: 3px;
    border-radius: 2px;
    background: #76897f;
  }
  .dock button.current::before {
    content: '';
    position: absolute;
    inset: 3px;
    border-radius: 4px;
    background: #fff;
    opacity: 0.5;
  }
  .dock button.current svg { position: relative; }
  .dock button.current::after { left: 14px; width: 16px; background: #0078d4; }
  .search {
    display: flex;
    align-items: center;
    width: 219px;
    height: 32px;
    margin: 0 3px 0 2px;
    padding: 0 4px 0 11px;
    border: 1px solid #b5d6ca;
    border-radius: 16px;
    background: #eef8f4;
  }
  .search input { flex: 1; min-width: 0; padding: 0 10px; border: 0; outline: 0; background: transparent; font: inherit; font-size: 14px; }
  .search input::placeholder { color: #555; }
  .tray { display: flex; align-items: center; justify-content: flex-end; padding: 0 19px 2px 0; }
  .tray .sync { margin-left: 19px; }
  .ime { margin-left: 16px; font-size: 14px; }
  .ime.py { margin-left: 24px; }
  .tray .net { margin-left: 22px; }
  .tray .vol { margin-left: 8px; }
  .tray time { margin-left: 13px; line-height: 16px; text-align: right; }
</style>
